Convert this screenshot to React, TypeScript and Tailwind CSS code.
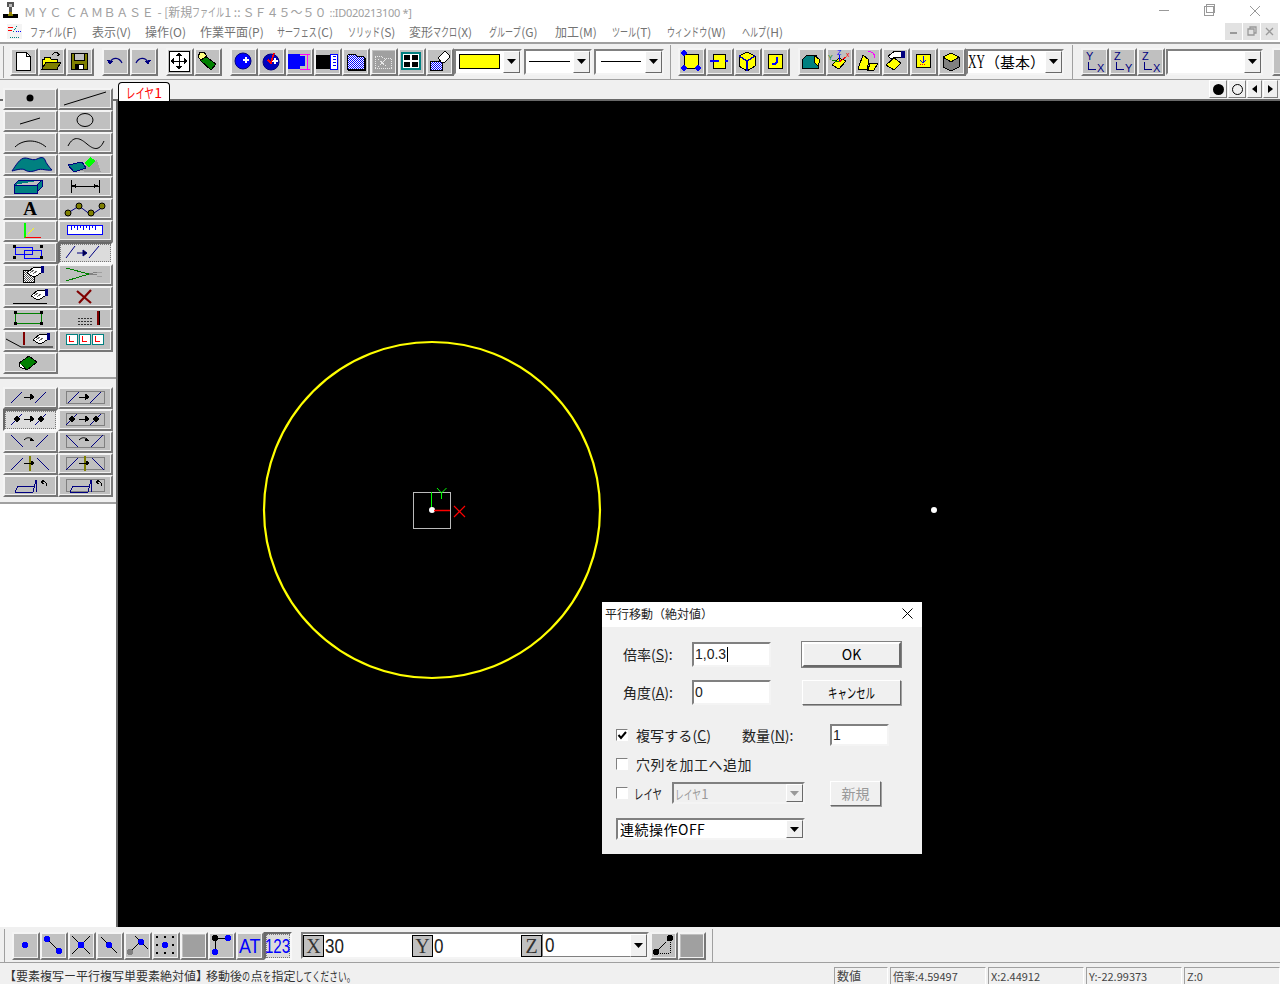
import type { ReactNode } from "react";

const JP = "font-['Noto_Sans_CJK_JP','Noto_Sans',sans-serif]";

// narrow kana like the UI font of the original
const K = ({ t, s = 12 }: { t: string; s?: number }) => (
  <span className="inline-block origin-left scale-x-[0.67] whitespace-nowrap" style={{ width: t.length * s * 0.67 }}>
    {t}
  </span>
);

const Btn = ({ wide, pressed, children }: { wide?: boolean; pressed?: boolean; children?: ReactNode }) => (
  <div
    className={`flex shrink-0 items-center justify-center border-2 ${wide ? "h-[22px] w-[55px]" : "size-[28px]"} ${
      pressed
        ? "border-t-[#696969] border-l-[#696969] border-r-[#f8f8f8] border-b-[#f8f8f8] bg-[#dcdcdc] outline-1 -outline-offset-3 outline-dotted outline-[#777]"
        : "border-t-[#f4f4f4] border-l-[#f4f4f4] border-r-[#777] border-b-[#777] bg-[#c0c0c0] shadow-[inset_-1px_-1px_0_#f0f0f0]"
    }`}
  >
    {children}
  </div>
);

const Ic = ({ w = 22, h = 22, children }: { w?: number; h?: number; children: ReactNode }) => (
  <svg width={w} height={h} viewBox={`1 1 ${w} ${h}`} shapeRendering="crispEdges" className="shrink-0 overflow-visible">
    {children}
  </svg>
);

const Dots = ({ id, c = "#0000ff" }: { id: string; c?: string }) => (
  <pattern id={id} width="2" height="2" patternUnits="userSpaceOnUse">
    <rect width="2" height="2" fill="#fff" />
    <rect width="1" height="1" fill={c} />
    <rect x="1" y="1" width="1" height="1" fill={c} />
  </pattern>
);

const Arrow = ({ c = "#000" }: { c?: string }) => (
  <svg width="9" height="5" viewBox="0 0 9 5">
    <path d="M0 0h9L4.500 5z" fill={c} />
  </svg>
);

const Combo = ({ className, children, gray }: { className: string; children?: ReactNode; gray?: boolean }) => (
  <div
    className={`flex shrink-0 items-stretch border-2 border-t-[#808080] border-l-[#808080] border-r-[#f4f4f4] border-b-[#f4f4f4] ${gray ? "bg-[#f0f0f0]" : "bg-white"} ${className}`}
  >
    <div className="flex min-w-0 flex-1 items-center overflow-hidden">{children}</div>
    <div className="flex w-[17px] shrink-0 items-center justify-center border border-t-white border-l-white border-r-[#696969] border-b-[#696969] bg-[#f0f0f0]">
      <Arrow c={gray ? "#999" : "#000"} />
    </div>
  </div>
);

const Hand = ({ x = 0, y = 0 }: { x?: number; y?: number }) => (
  <g transform={`translate(${x} ${y})`}>
    <path d="M1 8 8 2h5l2 1v5l-5 3H6z" fill="#fff" stroke="#000" />
    <path d="M4 8 8 5m-1 4 4-3" stroke="#666" fill="none" />
    <rect x="15" y="1" width="3" height="7" fill="#000080" />
  </g>
);

/* ---------- main toolbar icons ---------- */
const tb1 = [
  <Ic key="new"><path d="M4 2h10l4 4v14H4z" fill="#fff" stroke="#000" /><path d="M14 2v4h4" fill="none" stroke="#000" /></Ic>,
  <Ic key="open"><path d="M2 9h2V7h6l1 2h6v10H2z" fill="#ff0" stroke="#000" /><path d="M2 19 6 12h15l-4 7z" fill="#808000" stroke="#000" /><path d="M12 5c2-3 5-3 7-1" fill="none" stroke="#000" /><path d="m17 6 3-1-1-3z" fill="#000" /></Ic>,
  <Ic key="save"><rect x="3" y="3" width="16" height="16" fill="#808000" stroke="#000" /><rect x="6" y="3" width="10" height="7" fill="#c0c0c0" stroke="#000" /><rect x="7" y="14" width="8" height="5" fill="#fff" stroke="#000" /><rect x="8" y="15" width="3" height="4" fill="#000" /></Ic>,
];
const tb2 = [
  <Ic key="undo"><path d="M6 12c3-5 9-5 12 1" fill="none" stroke="#000080" strokeWidth="1.200" shapeRendering="auto" /><path d="m3 10 6 1-3 4z" fill="#000080" /></Ic>,
  <Ic key="redo"><path d="M4 13c3-6 9-6 12-1" fill="none" stroke="#000080" strokeWidth="1.200" shapeRendering="auto" /><path d="m19 10-6 1 3 4z" fill="#000080" /></Ic>,
];
const tb3 = [
  <Ic key="fit"><rect x="1" y="1" width="20" height="20" fill="#fff" stroke="#000" /><path d="M11 3v16M3 11h16" stroke="#000" /><path d="m11 2 3 4H8zm0 18-3-4h6zM2 11l4-3v6zm18 0-4 3V8z" fill="#000" /></Ic>,
  <Ic key="erase"><path d="M9 6 20 14l-5 6L4 10z" fill="#008000" stroke="#000" /><path d="M4 2h4l3 4-6 4-3-3z" fill="#ffff80" stroke="#000" /></Ic>,
];
const tb4 = [
  <Ic key="ball"><circle cx="11" cy="11" r="8" fill="#0000ff" stroke="#000080" shapeRendering="auto" /><path d="M13 7h2v2h2v2h-2v2h-2v-2h-2V9h2z" fill="#fff" /></Ic>,
  <Ic key="ball2"><circle cx="11" cy="12" r="8" fill="#0000c0" stroke="#000080" shapeRendering="auto" /><path d="M14 8h2v2h2v2h-2v2h-2v-2h-2v-2h2z" fill="#fff" /><path d="m8 10 3 3 3-10" fill="none" stroke="#ff0000" strokeWidth="1.600" /></Ic>,
  <Ic key="dim"><rect x="0" y="4" width="12" height="15" fill="#0000ff" /><rect x="12" y="6" width="5" height="10" fill="#0000ff" /><path d="M12 4h10M12 19h10M19 4v15" stroke="#ff00ff" fill="none" /></Ic>,
  <Ic key="view"><rect x="0" y="5" width="14" height="13" fill="#000" stroke="#000" /><rect x="14" y="4" width="7" height="15" fill="#fff" stroke="#0000ff" /><path d="M17 6h3M17 9h3M17 12h3M17 15h3" stroke="#0000ff" /></Ic>,
  <Ic key="folderd"><defs><Dots id="fd" /></defs><path d="M3 19V6l2-2h6l2 2h6l1 1v12z" fill="url(#fd)" stroke="#000" /><path d="M21 8v12H4" fill="none" stroke="#000" strokeWidth="1.400" /></Ic>,
  <Ic key="folderx"><rect x="1" y="1" width="22" height="22" fill="#a0a0a0" /><path d="M3 18V6h6l2 2h8v10z" fill="none" stroke="#e8e8e8" strokeDasharray="1 1" /><path d="m6 17 9-9m-9 1 9 8" stroke="#e8e8e8" strokeDasharray="2 1" /></Ic>,
  <Ic key="grid"><rect x="2" y="3" width="18" height="16" fill="#fff" stroke="#008080" strokeWidth="2" /><rect x="4" y="5" width="6" height="5" fill="#000" /><rect x="12" y="5" width="6" height="5" fill="#000" /><rect x="4" y="12" width="6" height="5" fill="#000" /><rect x="12" y="12" width="6" height="5" fill="#000" /></Ic>,
  <Ic key="handd"><defs><Dots id="hd" /></defs><path d="M2 11h12v9H2z" fill="url(#hd)" stroke="#000" /><path d="m10 8 7-7 4 4v3l-4 4h-4z" fill="#fff" stroke="#000" /></Ic>,
];
const tb5 = [
  <Ic key="s1"><rect x="4" y="4" width="14" height="14" fill="#ff0" stroke="#000" /><circle cx="4" cy="3" r="2.600" fill="#0000ff" /><circle cx="4" cy="18" r="2.600" fill="#0000ff" /><circle cx="18" cy="18" r="2.600" fill="#0000ff" /></Ic>,
  <Ic key="s2"><rect x="5" y="4" width="12" height="14" fill="#ff0" stroke="#000" /><path d="M2 11h9M17 11h3" stroke="#0000ff" strokeWidth="2" /></Ic>,
  <Ic key="s3"><path d="m11 2 8 4v10l-8 5-8-5V6z" fill="#ff0" stroke="#000" /><path d="m11 11 8-5M3 6l8 5v10" fill="none" stroke="#0000c0" strokeWidth="1.400" /></Ic>,
  <Ic key="s4"><rect x="4" y="4" width="14" height="14" fill="#ff0" stroke="#000" /><path d="M13 7v5l-2 2H8" fill="none" stroke="#0000ff" strokeWidth="2" /></Ic>,
];
const tb6 = [
  <Ic key="c1"><path d="M2 10 7 5h9l2 5v8H2z" fill="#008080" stroke="#000" /><path d="m15 6 5 4-2 6-4-4z" fill="#ff0" stroke="#000" /></Ic>,
  <Ic key="c2"><path d="m4 15 7-7 7 3-7 8z" fill="#ff0" stroke="#000" /><path d="M11 12V5" stroke="#0000ff" /><path d="m11 12 7-5" stroke="#ff0000" /><path d="m11 12-7-2" stroke="#008000" /><text x="9" y="5" fontSize="7" fill="#0000ff" className="font-['Liberation_Sans']">Z</text><text x="0" y="10" fontSize="7" fill="#008000" className="font-['Liberation_Sans']">Y</text><text x="18" y="7" fontSize="7" fill="#ff0000" className="font-['Liberation_Sans']">x</text></Ic>,
  <Ic key="c3"><path d="M2 19 7 5l6 5-2 10z" fill="#ff0" stroke="#000" /><path d="M12 20 14 13h8l-4 7z" fill="#ff0" stroke="#000" /><path d="M12 2c4-1 7 2 7 6" fill="none" stroke="#ff00ff" /></Ic>,
  <Ic key="c4"><path d="m2 15 8-7 7 5-7 7z" fill="#ff0" stroke="#000" /><path d="m4 6 7-5h7v6h-7L7 9z" fill="#fff" stroke="#000" /><rect x="17" y="1" width="4" height="7" fill="#000080" /></Ic>,
  <Ic key="c5"><rect x="4" y="4" width="14" height="13" fill="#ff0" stroke="#000" /><path d="M11 6v7M8 10l3 3 3-3" fill="none" stroke="#0000ff" /><path d="M8 14h6" stroke="#ff0000" strokeDasharray="1 1" /></Ic>,
  <Ic key="c6"><path d="M11 3 19 7v10l-8 4-8-4V7z" fill="#808080" stroke="#000" /><path d="m11 3 8 4-8 5-8-5z" fill="#ff0" stroke="#000" /></Ic>,
];
const AxisIcon = ({ a, b }: { a: string; b: string }) => (
  <Ic>
    <path d="M5 12v7h8" fill="none" stroke="#000080" />
    <text x="3" y="10" fontSize="11" fill="#000080" className="font-['Liberation_Sans']">{a}</text>
    <text x="14" y="22" fontSize="11" fill="#000080" className="font-['Liberation_Sans']">{b}</text>
  </Ic>
);

/* ---------- left panel icons ---------- */
const L = ({ children }: { children: ReactNode }) => <Ic w={48} h={16}>{children}</Ic>;
const Box = () => <rect x="5" y="2" width="38" height="12" fill="none" stroke="#808080" />;
const Mv = () => <path d="m18 8h9m-3-3 4 3-4 3z" fill="#000" stroke="#000" />;

const leftA: ReactNode[] = [
  <L key="a"><circle cx="24" cy="8" r="3.500" fill="#000" shapeRendering="auto" /></L>,
  <L key="b"><path d="M3 15 45 2" stroke="#000" fill="none" shapeRendering="auto" /></L>,
  <L key="c"><path d="M14 12 34 6" stroke="#000" shapeRendering="auto" /></L>,
  <L key="d"><ellipse cx="24" cy="8" rx="8" ry="6.500" fill="none" stroke="#000" shapeRendering="auto" /></L>,
  <L key="e"><path d="M9 13c8-8 22-8 31 0" fill="none" stroke="#000" shapeRendering="auto" /></L>,
  <L key="f"><path d="M7 12C13 0 20 5 26 10s12 8 17-3" fill="none" stroke="#000" shapeRendering="auto" /></L>,
  <L key="g"><path d="M6 15C10 9 14 2 19 2c4 0 8 3 12 1s7-2 8 1 4 7 7 10c-6 1-10-2-15 0s-9 2-12 0-9 0-13 1z" fill="#008080" stroke="#000080" shapeRendering="auto" /></L>,
  <L key="h"><path d="M14 14 26 16 40 16 36 4 28 8z" fill="#a0a0a0" /><path d="M7 9 21 6l4 6-12 4z" fill="#008080" stroke="#000080" /><path d="m23 7 6-6 6 4-7 6z" fill="#00ff00" /></L>,
  <L key="i"><path d="M8 7 13 2h23l-5 5v7l5-5V2M8 7h23v8H8z" fill="#008080" stroke="#000080" /></L>,
  <L key="j"><path d="M10 2v13M38 2v13M10 8h28" stroke="#000" /><path d="m10 8 5-2v4zm28 0-5 2V6z" fill="#000" /></L>,
  <L key="k"><text x="24" y="15" textAnchor="middle" fontSize="19" fontWeight="700" fill="#000" className="font-['Liberation_Serif']">A</text></L>,
  <L key="l"><path d="M7 13 18 6l12 9L42 7" fill="none" stroke="#000080" shapeRendering="auto" /><g fill="#808000" stroke="#000" shapeRendering="auto"><circle cx="7" cy="13" r="3" /><circle cx="18" cy="6" r="3" /><circle cx="30" cy="13" r="3" /><circle cx="41" cy="6" r="3" /></g></L>,
  <L key="m"><path d="M19 1v15" stroke="#00ff00" strokeWidth="1.500" /><path d="M19 15h16" stroke="#ff0000" /><path d="m20 14 8-8" stroke="#ffff00" strokeDasharray="2 1" /></L>,
  <L key="n"><rect x="6" y="3" width="35" height="9" fill="#fff" stroke="#0000ff" /><path d="M10 3v5m3-5v3m3-3v5m3-5v3m3-3v5m3-5v3m3-3v5m3-5v3m3-3v5" stroke="#0000ff" /></L>,
  <L key="o"><path d="M9 3h17v7H9zM18 6h17v8H18z" fill="none" stroke="#0000ff" /><g fill="#000"><rect x="7" y="1" width="3" height="3" /><rect x="34" y="1" width="3" height="3" /><rect x="7" y="12" width="3" height="3" /><rect x="34" y="12" width="3" height="3" /></g></L>,
  <L key="p"><path d="m5 14 9-12M16 9h9m-3-3 4 3-4 3zM28 14l10-12" fill="#000" stroke="#000080" shapeRendering="auto" /></L>,
  <L key="q"><defs><Dots id="qd" c="#555" /></defs><rect x="17" y="4" width="11" height="12" fill="url(#qd)" stroke="#000" /><Hand x="20" y="-1" /></L>,
  <L key="r"><path d="M5 2 28 8 5 15M5 8" fill="none" stroke="#008000" /><path d="m28 8 8-2m-8 2h8" stroke="#808080" /><path d="M36 6h5M36 10h5" stroke="#a0a0a0" /></L>,
  <L key="s"><path d="M7 15h34" stroke="#000" /><Hand x="24" y="0" /></L>,
  <L key="t"><path d="m16 3 14 12m0-13L18 15" stroke="#800000" strokeWidth="2.200" shapeRendering="auto" /></L>,
  <L key="u"><rect x="9" y="3" width="26" height="10" fill="none" stroke="#008000" /><g fill="#000"><rect x="8" y="1" width="3" height="3" /><rect x="34" y="1" width="3" height="3" /><rect x="8" y="12" width="3" height="3" /><rect x="34" y="12" width="3" height="3" /></g></L>,
  <L key="v"><path d="M17 8h14M17 11h14M17 14h14" stroke="#333" strokeDasharray="2 1" /><rect x="36" y="1" width="2" height="14" fill="#800000" /><rect x="38" y="1" width="1" height="14" fill="#000" /></L>,
  <L key="w"><path d="m0 7 15 8h32" fill="none" stroke="#000" shapeRendering="auto" /><rect x="17" y="0" width="2" height="13" fill="#800000" /><Hand x="26" y="0" /></L>,
  <L key="x">{[5, 18, 31].map((x) => (<g key={x}><rect x={x} y="2" width="11" height="10" fill="#fff" stroke="#008080" /><path d={`M${x + 3} 4v5h5`} fill="none" stroke="#ff0000" /></g>))}</L>,
  <L key="y"><path d="m13 9 10-7 8 6-10 8z" fill="#008000" stroke="#000" /><path d="m13 9 1 4 7 3" fill="#fff" stroke="#000" /></L>,
  <span key="z" />,
];

const leftB: ReactNode[] = [
  <L key="1"><path d="m5 14 11-11M29 14 40 3" stroke="#000080" shapeRendering="auto" /><Mv /></L>,
  <L key="2"><Box /><path d="m7 14 11-11M29 14 40 3" stroke="#000080" shapeRendering="auto" /><Mv /></L>,
  <L key="3"><path d="m5 14 11-11M29 14 40 3" stroke="#000080" shapeRendering="auto" /><circle cx="11" cy="8" r="2.600" fill="#000" /><circle cx="35" cy="8" r="2.600" fill="#000" /><Mv /></L>,
  <L key="4"><Box /><path d="m5 14 11-11M29 14 40 3" stroke="#000080" shapeRendering="auto" /><circle cx="11" cy="8" r="2.600" fill="#000" /><circle cx="35" cy="8" r="2.600" fill="#000" /><Mv /></L>,
  <L key="5"><path d="m5 2 12 12M30 14 42 2" stroke="#000080" shapeRendering="auto" /><path d="M18 7c3-3 6-3 9 0" fill="none" stroke="#000" shapeRendering="auto" /><path d="m25 5 3 3-4 0z" fill="#000" /></L>,
  <L key="6"><Box /><path d="m5 2 12 12M30 14 42 2" stroke="#000080" shapeRendering="auto" /><path d="M18 7c3-3 6-3 9 0" fill="none" stroke="#000" shapeRendering="auto" /><path d="m25 5 3 3-4 0z" fill="#000" /></L>,
  <L key="7"><path d="M5 15 17 3M31 3l12 12" stroke="#000080" shapeRendering="auto" /><rect x="23" y="1" width="2" height="15" fill="#808000" /><path d="M18 8h10m-3-2 3 2-3 2z" fill="#000" stroke="#000" /></L>,
  <L key="8"><Box /><path d="M5 15 17 3M31 3l12 12" stroke="#000080" shapeRendering="auto" /><rect x="23" y="1" width="2" height="15" fill="#808000" /><path d="M18 8h10m-3-2 3 2-3 2z" fill="#000" stroke="#000" /></L>,
  <L key="9"><path d="M9 15h18l3-12v12" fill="none" stroke="#000080" /><path d="m9 15 3-6h17" fill="none" stroke="#000080" /><path d="M41 9c0-3-2-5-5-4m2-2-3 2 3 2" fill="none" stroke="#000" /></L>,
  <L key="10"><Box /><path d="M9 15h18l3-12v12" fill="none" stroke="#000080" /><path d="m9 15 3-6h17" fill="none" stroke="#000080" /><path d="M41 9c0-3-2-5-5-4m2-2-3 2 3 2" fill="none" stroke="#000" /></L>,
];

/* ---------- bottom toolbar icons ---------- */
const Snap = ({ children }: { children: ReactNode }) => <Ic>{children}</Ic>;
const snaps = [
  <Snap key="1"><circle cx="11" cy="11" r="3" fill="#0000ff" /></Snap>,
  <Snap key="2"><path d="m4 4 14 14" stroke="#000" /><circle cx="5" cy="5" r="3" fill="#0000ff" /><circle cx="17" cy="17" r="3" fill="#0000ff" /></Snap>,
  <Snap key="3"><path d="m2 2 18 18M20 2 2 20" stroke="#000" /><rect x="8" y="8" width="6" height="6" fill="#0000ff" /></Snap>,
  <Snap key="4"><path d="m3 3 16 16" stroke="#000" /><circle cx="11" cy="11" r="3" fill="#0000ff" /></Snap>,
  <Snap key="5"><path d="m9 2 13 13" stroke="#000" /><circle cx="15" cy="8" r="3" fill="#0000ff" /><path d="m5 17 8-8" stroke="#000" /><circle cx="4" cy="18" r="3" fill="#808080" /></Snap>,
  <Snap key="6">{[3, 11, 19].flatMap((x) => [3, 19].map((y) => <rect key={`${x}${y}`} x={x - 1} y={y - 1} width="2" height="2" fill="#000" />))}<rect x="2" y="10" width="2" height="2" fill="#000" /><rect x="18" y="10" width="2" height="2" fill="#000" /><circle cx="11" cy="11" r="3" fill="#0000ff" /></Snap>,
  <Snap key="7"><rect x="1" y="1" width="22" height="22" fill="#a0a0a0" /></Snap>,
  <Snap key="8"><path d="M5 4h12M5 4v14" stroke="#000" /><circle cx="5" cy="4" r="3" fill="#000" /><circle cx="18" cy="4" r="3" fill="#0000ff" /><circle cx="5" cy="18" r="3" fill="#0000ff" /></Snap>,
];

const Menu = ({ className, children }: { className: string; children: ReactNode }) => (
  <span className={`shrink-0 whitespace-nowrap ${className}`}>{children}</span>
);

const Row = ({ children, className = "" }: { children: ReactNode; className?: string }) => (
  <div className={`flex shrink-0 ${className}`}>{children}</div>
);

const Sunken = ({ className, children }: { className: string; children?: ReactNode }) => (
  <div
    className={`flex shrink-0 items-center overflow-hidden border-2 border-t-[#808080] border-l-[#808080] border-r-[#f4f4f4] border-b-[#f4f4f4] bg-white pl-[1px] text-[14px] leading-none text-[#222] ${className}`}
  >
    {children}
  </div>
);

const DlgBtn = ({ children, className, gray, thick }: { children: ReactNode; className: string; gray?: boolean; thick?: boolean }) => (
  <div
    className={`flex shrink-0 items-center justify-center border-t-white border-l-white ${thick ? "border-2 border-r-[#696969] border-b-[#696969] outline-1 outline-[#808080]" : "border border-r-[#696969] border-b-[#696969] shadow-[1px_1px_0_#a0a0a0]"} bg-[#f0f0f0] text-[14px] ${gray ? "text-[#999]" : "text-black"} ${className}`}
  >
    {children}
  </div>
);

const Check = ({ on }: { on?: boolean }) => (
  <div className="flex size-[12px] shrink-0 items-center justify-center border border-t-[#808080] border-l-[#808080] border-r-white border-b-white bg-white">
    {on && (
      <svg width="10" height="10" viewBox="0 0 10 10">
        <path d="m1.500 5 2.500 3 5-6" fill="none" stroke="#000" strokeWidth="2" />
      </svg>
    )}
  </div>
);

const Stat = ({ className, children }: { className: string; children: ReactNode }) => (
  <div
    className={`flex h-[17px] shrink-0 items-center border border-b-0 border-t-[#a0a0a0] border-l-[#a0a0a0] border-r-white pl-[2px] text-[11px] leading-none text-[#444] ${className}`}
  >
    {children}
  </div>
);

const Letter = ({ c }: { c: string }) => (
  <div className="flex h-[22px] w-[21px] shrink-0 items-center justify-center border border-black bg-[#c0c0c0] font-['Liberation_Serif'] text-[20px] leading-none text-[#333]">
    {c}
  </div>
);

const Num = ({ children }: { children: ReactNode }) => (
  <span className="inline-block origin-left scale-x-[0.85] font-['Liberation_Sans'] text-[20px] font-light leading-none text-[#222]">
    {children}
  </span>
);

export default function App() {
  return (
    <div className={`flex h-[984px] w-[1280px] flex-col overflow-hidden bg-white ${JP}`}>
      {/* title */}
      <div className="flex h-[21px] shrink-0 items-center bg-white pl-[3px] text-[12px] leading-none text-[#a0a0a0]">
        <svg width="15" height="17" viewBox="0 0 15 17" shapeRendering="crispEdges" className="shrink-0">
          <path d="M4 0h7v5H9v5H6V5H4z" fill="#555" />
          <path d="M6 2h3v3H6z" fill="#bbb" />
          <rect x="6" y="10" width="3" height="2" fill="#a08000" />
          <rect x="0" y="12" width="15" height="4" fill="#000" />
          <rect x="5" y="12" width="5" height="2" fill="#808000" />
        </svg>
        <span className="ml-[6px] mt-[3px] flex items-baseline whitespace-nowrap">
          <span className="tracking-[0.7px]">ＭＹＣ ＣＡＭＢＡＳＥ</span>
          <span className="ml-[3px]">- [新規<K t="ファイル" />1 ::</span>
          <span className="ml-[2px]">ＳＦ４５～５０</span>
          <span className="ml-[3px] font-['Noto_Sans'] text-[11px] tracking-[-0.3px]">::ID020213100 *]</span>
        </span>
        <div className="ml-auto flex items-center text-[#888]">
          <div className="mr-[35px] h-px w-[10px] bg-[#999]" />
          <div className="relative mr-[36px] size-[10px] border border-[#999] bg-white before:absolute before:-top-[3px] before:left-[1px] before:size-[9px] before:border before:border-[#999]" />
          <svg width="10" height="10" viewBox="0 0 10 10" className="mr-[20px]">
            <path d="m0 0 10 10M10 0 0 10" stroke="#999" />
          </svg>
        </div>
      </div>

      {/* menu */}
      <div className="flex h-[21px] shrink-0 items-center bg-white pl-[7px] text-[12px] leading-none text-[#737373]">
        <svg width="15" height="15" viewBox="0 0 15 15" shapeRendering="crispEdges" className="shrink-0">
          <rect x="0" y="0" width="15" height="15" fill="#f4f4f4" />
          <path d="M1 3h5M1 6h4" stroke="#ff0000" />
          <path d="M10 2 6 9M3 13h9" stroke="#008080" strokeDasharray="1 1" />
          <path d="M9 7h5" stroke="#0000ff" strokeDasharray="1 1" />
        </svg>
        <div className="ml-[8px] flex">
          <Menu className="w-[62px]"><K t="ファイル" />(F)</Menu>
          <Menu className="w-[53px]">表示(V)</Menu>
          <Menu className="w-[55px]">操作(O)</Menu>
          <Menu className="w-[77px]">作業平面(P)</Menu>
          <Menu className="w-[71px]"><K t="サーフェス" />(C)</Menu>
          <Menu className="w-[61px]"><K t="ソリッド" />(S)</Menu>
          <Menu className="w-[80px]">変形<K t="マクロ" />(X)</Menu>
          <Menu className="w-[66px]"><K t="グループ" />(G)</Menu>
          <Menu className="w-[57px]">加工(M)</Menu>
          <Menu className="w-[55px]"><K t="ツール" />(T)</Menu>
          <Menu className="w-[75px]"><K t="ウィンドウ" />(W)</Menu>
          <Menu className="w-[50px]"><K t="ヘルプ" />(H)</Menu>
        </div>
        <div className="ml-auto mr-[2px] flex gap-px">
          {["m3 8h7", "M3 4h6v6H3zM5 4V2h6v6H9", "m3 3 7 7m0-7-7 7"].map((d) => (
            <div key={d} className="flex h-[17px] w-[17px] items-center justify-center bg-[#e2e2e2]">
              <svg width="13" height="13" viewBox="0 0 13 13">
                <path d={d} fill="none" stroke="#999" strokeWidth={d.length < 10 ? 2 : 1.300} />
              </svg>
            </div>
          ))}
        </div>
      </div>

      {/* main toolbar */}
      <div className="flex h-[38px] shrink-0 items-center border-t-2 border-b border-t-[#a0a0a0] border-b-[#a0a0a0] bg-[#f0f0f0] pl-[3px]">
        <div className="mr-[6px] h-[32px] w-px shrink-0 bg-[#a0a0a0]" />
        <Row className="mr-[8px]">{tb1.map((x, i) => <Btn key={i}>{x}</Btn>)}</Row>
        <Row className="mr-[8px]">{tb2.map((x, i) => <Btn key={i}>{x}</Btn>)}</Row>
        <Row className="mr-[8px]">{tb3.map((x, i) => <Btn key={i}>{x}</Btn>)}</Row>
        <Row>{tb4.map((x, i) => <Btn key={i}>{x}</Btn>)}</Row>
        <Combo className="h-[26px] w-[68px]">
          <div className="ml-[3px] h-[15px] w-[41px] border border-black bg-[#ffff00]" />
        </Combo>
        <div className="w-[2px] shrink-0" />
        <Combo className="h-[26px] w-[68px]">
          <div className="ml-[3px] h-px w-[41px] bg-black" />
        </Combo>
        <div className="w-[2px] shrink-0" />
        <Combo className="h-[26px] w-[70px]">
          <div className="ml-[5px] h-px w-[40px] bg-black" />
        </Combo>
        <div className="mx-[6px] h-[34px] w-px shrink-0 bg-[#a0a0a0]" />
        <div className="w-px shrink-0" />
        <Row className="mr-[8px]">{tb5.map((x, i) => <Btn key={i}>{x}</Btn>)}</Row>
        <Row>{tb6.map((x, i) => <Btn key={i}>{x}</Btn>)}</Row>
        <Combo className="h-[26px] w-[98px]">
          <span className="flex items-center whitespace-nowrap text-[15px] leading-none text-black">
            <span className="inline-block w-[17px] origin-left scale-x-[0.65] font-['Liberation_Serif'] text-[18px]">XY</span>（基本）
          </span>
        </Combo>
        <div className="mx-[8px] h-[34px] w-px shrink-0 bg-[#a0a0a0]" />
        <Row className="mr-px">
          <Btn><AxisIcon a="Y" b="X" /></Btn>
          <Btn><AxisIcon a="Z" b="Y" /></Btn>
          <Btn><AxisIcon a="Z" b="X" /></Btn>
        </Row>
        <Combo className="h-[26px] w-[97px]" />
        <Row className="ml-[9px]">
          <Btn>
            <svg width="6" height="8" viewBox="0 0 6 8"><path d="M0 4 6 0v8z" fill="#000080" /></svg>
          </Btn>
        </Row>
      </div>

      {/* tab row */}
      <div className="flex h-[21px] shrink-0 items-end border-b-2 border-b-[#696969] bg-[#f0f0f0]">
        <div className="mb-[-2px] ml-[118px] flex h-[19px] w-[52px] items-center justify-center rounded-t-[4px] border border-b-0 border-black bg-white text-[14px] leading-none text-[#ff0000]">
          <K t="レイヤ" s={14} />1
        </div>
        <div className="mb-px ml-auto mr-[2px] flex gap-px">
          {[
            <div key="a" className="size-[11px] rounded-full bg-black" />,
            <div key="b" className="size-[11px] rounded-full border border-black" />,
            <svg key="c" width="5" height="8" viewBox="0 0 5 8"><path d="M5 0v8L0 4z" fill="#000" /></svg>,
            <svg key="d" width="5" height="8" viewBox="0 0 5 8"><path d="M0 0v8l5-4z" fill="#000" /></svg>,
          ].map((x, i) => (
            <div
              key={i}
              className={`flex h-[18px] items-center justify-center border border-t-white border-l-white border-r-[#808080] border-b-[#808080] bg-[#f0f0f0] ${i < 2 ? "w-[18px]" : "w-[15px]"}`}
            >
              {x}
            </div>
          ))}
        </div>
      </div>

      {/* body */}
      <div className="flex min-h-0 flex-1">
        {/* left panel */}
        <div className="flex w-[118px] shrink-0 flex-col border-r-2 border-r-[#696969] bg-white">
          <div className="bg-[#f0f0f0] pb-[3px] pl-[3px]">
            <div className="-mt-[13px] grid w-[110px] grid-cols-[55px_55px]">
              {leftA.map((x, i) => (i === 25 ? <span key={i} /> : <Btn key={i} wide pressed={i === 15}>{x}</Btn>))}
            </div>
          </div>
          <div className="h-[2px] bg-[#a0a0a0]" />
          <div className="border-b-2 border-b-[#a0a0a0] bg-[#f0f0f0] pb-[5px] pl-[3px] pt-[8px]">
            <div className="grid w-[110px] grid-cols-[55px_55px]">
              {leftB.map((x, i) => <Btn key={i} wide pressed={i === 2}>{x}</Btn>)}
            </div>
          </div>
        </div>

        {/* canvas */}
        <div className="relative min-w-0 flex-1 bg-black">
          <svg className="absolute inset-0 h-full w-full" viewBox="118 101 1162 826">
            <circle cx="432" cy="510" r="168" fill="none" stroke="#ffff00" strokeWidth="2.200" />
            <circle cx="934" cy="510" r="3" fill="#fff" />
            <rect x="413.500" y="492.500" width="37" height="36" fill="none" stroke="#bbb" shapeRendering="crispEdges" />
            <path d="M431.500 492v18" stroke="#00ff00" />
            <path d="m437 488 4.500 5 5-5M441.500 493v6" fill="none" stroke="#00ff00" />
            <circle cx="432" cy="510" r="3" fill="#fff" />
            <path d="M434 510.500h16" stroke="#ff0000" strokeWidth="1.500" />
            <path d="m454 506 11 11m0-11-11 11" stroke="#ff0000" strokeWidth="1.200" />
          </svg>
        </div>
      </div>

      {/* bottom toolbar */}
      <div className="flex h-[36px] shrink-0 items-center border-b border-b-[#a0a0a0] bg-[#f0f0f0] pl-[4px] pt-[2px]">
        <div className="mr-[7px] h-[34px] w-px shrink-0 bg-[#a0a0a0]" />
        {snaps.map((x, i) => <Btn key={i}>{x}</Btn>)}
        <Btn>
          <span className="inline-block scale-x-[0.85] font-['Liberation_Sans'] text-[21px] leading-none text-[#0000ff]">AT</span>
        </Btn>
        <Btn pressed>
          <span className="inline-block scale-x-[0.72] font-['Liberation_Sans'] text-[21px] leading-none text-[#0000ff]">123</span>
        </Btn>
        <div className="ml-[9px] flex h-[27px] w-[348px] shrink-0 items-stretch border-2 border-t-[#808080] border-l-[#808080] border-r-[#f4f4f4] border-b-[#f4f4f4] bg-white">
          <div className="flex min-w-0 flex-1 items-center">
            <Letter c="X" />
            <span className="w-[88px] shrink-0 pl-[1px]"><Num>30</Num></span>
            <Letter c="Y" />
            <span className="w-[88px] shrink-0 pl-[1px]"><Num>0</Num></span>
            <Letter c="Z" />
            <span className="flex h-full flex-1 items-center border-l border-b border-l-[#808080] border-b-[#808080] pl-[2px]"><Num>0</Num></span>
          </div>
          <div className="flex w-[17px] shrink-0 items-center justify-center border border-t-white border-l-white border-r-[#696969] border-b-[#696969] bg-[#f0f0f0]">
            <Arrow />
          </div>
        </div>
        <div className="w-px shrink-0" />
        <Btn>
          <Ic>
            <path d="M4 18 18 4" stroke="#000" strokeDasharray="2 1" />
            <path d="M4 19h14V5" fill="none" stroke="#000" strokeDasharray="1 1" />
            <circle cx="4" cy="18" r="3" fill="#000" />
            <circle cx="18" cy="4" r="3" fill="#000" />
          </Ic>
        </Btn>
        <Btn>
          <div className="size-[22px] bg-[#a0a0a0]" />
        </Btn>
        <div className="ml-[6px] h-[34px] w-px shrink-0 bg-[#a0a0a0]" />
      </div>

      {/* status */}
      <div className="flex h-[21px] shrink-0 items-end border-t border-t-[#f0f0f0] bg-[#f0f0f0] text-[#333]">
        <div className="flex flex-1 items-baseline self-center whitespace-nowrap pl-[4px] pt-[2px] text-[12px] leading-none">
          <span>【要素複写ー平行複写単要素絶対値】</span>
          <span className="-ml-[2px]">移動後</span>
          <K t="の" s={13} />
          <span>点</span>
          <K t="を" s={13} />
          <span>指定</span>
          <span className="text-[13px]"><K t="してください。" s={13} /></span>
        </div>
        <Stat className="w-[54px]"><span className="text-[12px]">数値</span></Stat>
        <div className="w-[2px] shrink-0" />
        <Stat className="w-[96px]">倍率:4.59497</Stat>
        <div className="w-[2px] shrink-0" />
        <Stat className="w-[96px]">X:2.44912</Stat>
        <div className="w-[2px] shrink-0" />
        <Stat className="w-[96px]">Y:-22.99373</Stat>
        <div className="w-[2px] shrink-0" />
        <Stat className="w-[96px]">Z:0</Stat>
      </div>

      {/* dialog */}
      <div className="absolute left-[602px] top-[602px] flex h-[252px] w-[320px] flex-col bg-[#f0f0f0] text-[13px] leading-none text-[#222]">
        <div className="flex h-[25px] shrink-0 items-center justify-between bg-white pb-[2px] pl-[3px] pr-[9px] text-[12px]">
          <span>平行移動（絶対値）</span>
          <svg width="11" height="11" viewBox="0 0 11 11">
            <path d="m.5.5 10 10m0-10-10 10" stroke="#000" />
          </svg>
        </div>
        <div className="flex flex-1 flex-col pl-[14px] pt-[14px]">
          <div className="flex h-[26px] items-center">
            <span className="ml-[7px] w-[69px] text-[14px]">倍率(<u>S</u>):</span>
            <Sunken className="h-[25px] w-[79px]">
              <span className="font-['Liberation_Sans']">1,0.3</span>
              <span className="ml-px h-[15px] w-px bg-black" />
            </Sunken>
            <div className="ml-[31px]">
              <DlgBtn className="h-[25px] w-[99px]" thick>OK</DlgBtn>
            </div>
          </div>
          <div className="mt-[12px] flex h-[26px] items-center">
            <span className="ml-[7px] w-[69px] text-[14px]">角度(<u>A</u>):</span>
            <Sunken className="h-[25px] w-[79px]">
              <span className="font-['Liberation_Sans']">0</span>
            </Sunken>
            <div className="ml-[31px]">
              <DlgBtn className="h-[25px] w-[99px]"><K t="キャンセル" s={14} /></DlgBtn>
            </div>
          </div>
          <div className="mt-[19px] flex h-[22px] items-center">
            <Check on />
            <span className="ml-[8px] w-[106px] text-[14px] tracking-[0.1px]">複写する(<u>C</u>)</span>
            <span className="w-[88px] text-[14px]">数量(<u>N</u>):</span>
            <Sunken className="h-[22px] w-[59px]">
              <span className="font-['Liberation_Sans']">1</span>
            </Sunken>
          </div>
          <div className="mt-[8px] flex h-[20px] items-center">
            <Check />
            <span className="ml-[8px] text-[14px] tracking-[0.5px]">穴列を加工へ追加</span>
          </div>
          <div className="mt-[6px] flex h-[26px] items-center">
            <Check />
            <span className="ml-[6px] w-[38px] text-[14px]"><K t="レイヤ" s={14} /></span>
            <Combo className="h-[22px] w-[133px]" gray>
              <span className="pl-[1px] text-[13px] text-[#999]"><K t="レイヤ" s={13} />1</span>
            </Combo>
            <div className="ml-[25px]">
              <DlgBtn className="h-[25px] w-[51px]" gray>新規</DlgBtn>
            </div>
          </div>
          <div className="mt-[12px]">
            <Combo className="h-[22px] w-[189px]">
              <span className="pl-[2px] text-[14px] tracking-[0.5px] text-black">連続操作OFF</span>
            </Combo>
          </div>
        </div>
      </div>
    </div>
  );
}
